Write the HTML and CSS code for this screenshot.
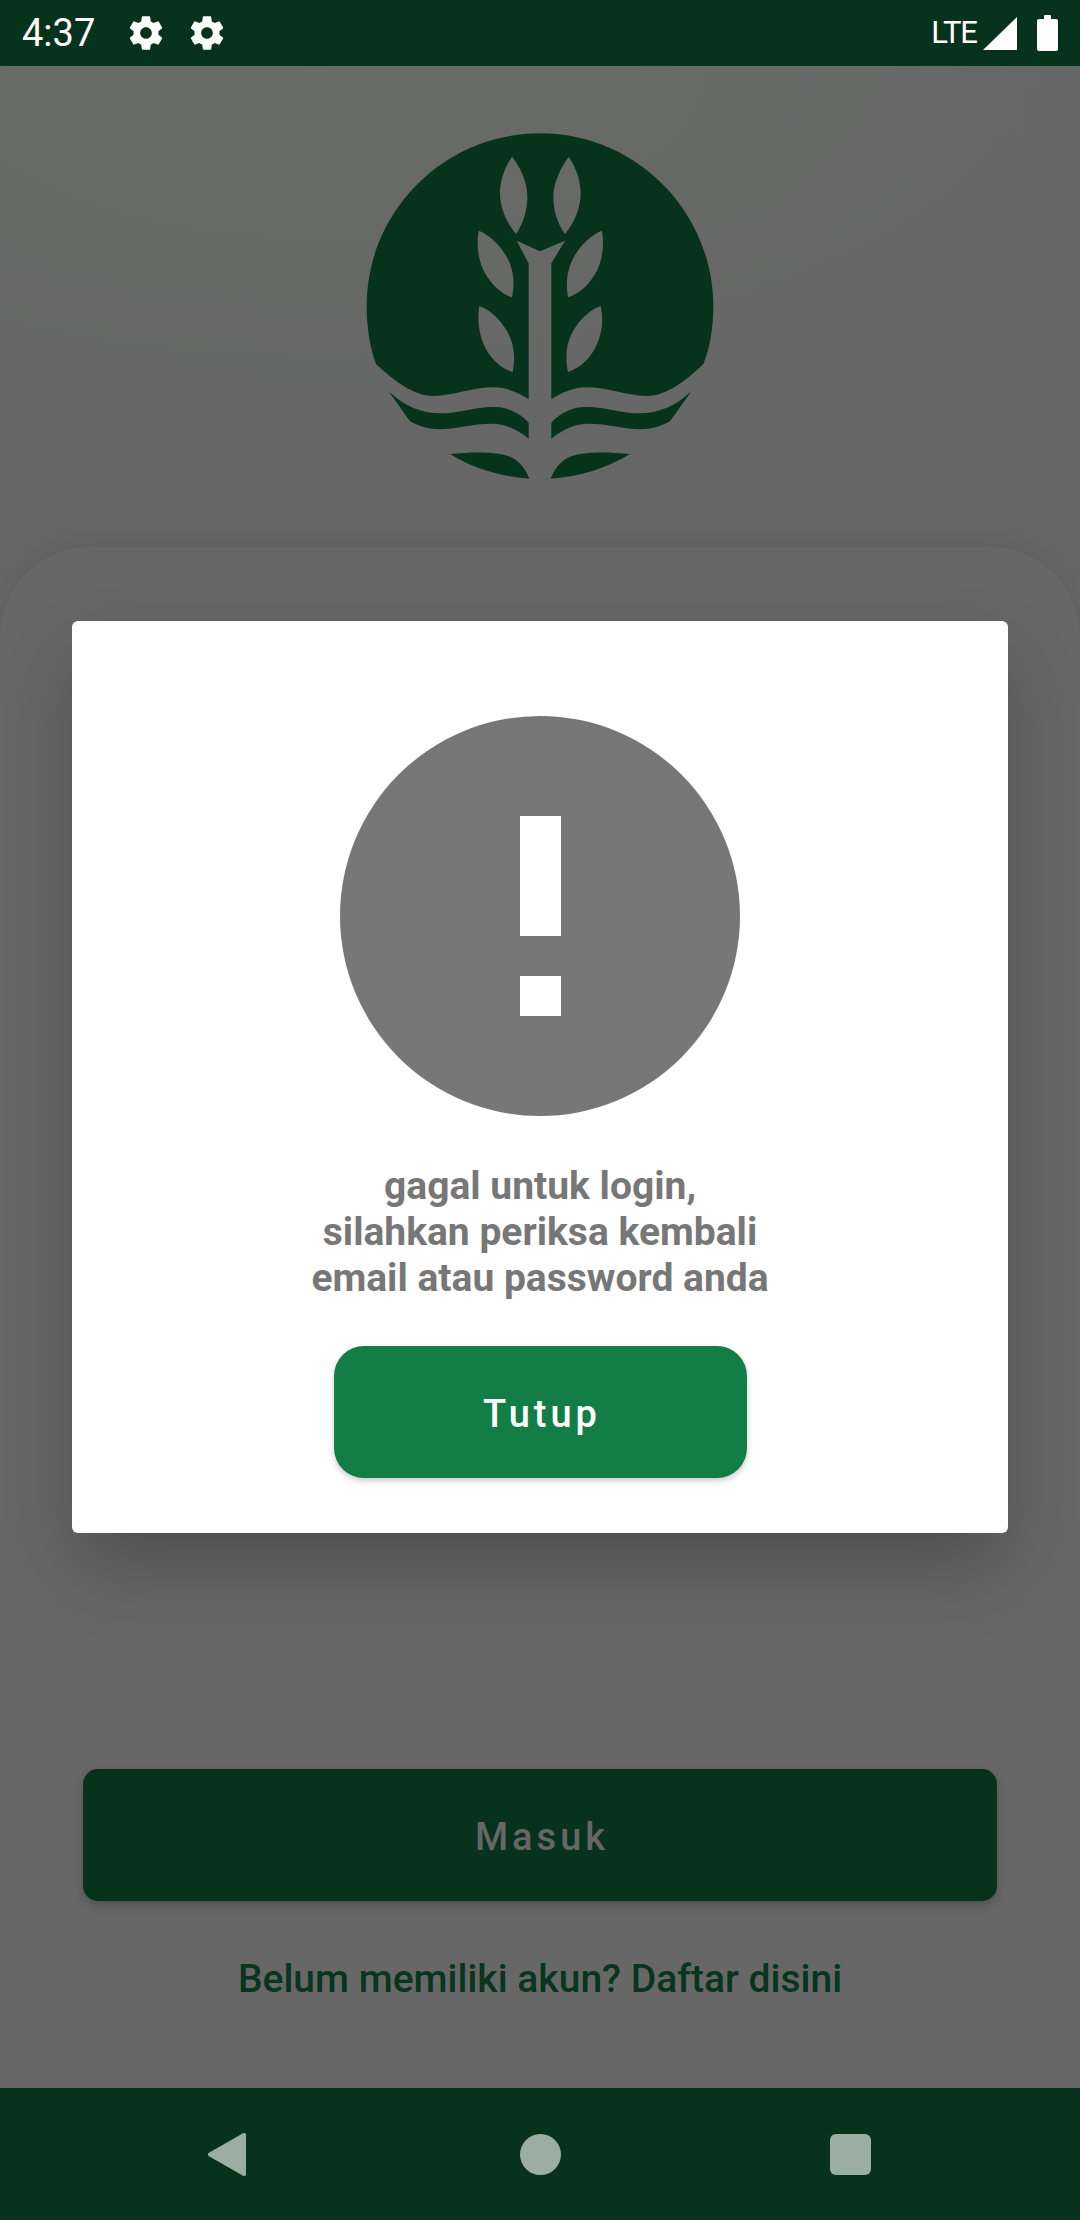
FILE: index.html
```html
<!DOCTYPE html>
<html lang="id">
<head>
<meta charset="utf-8">
<title>Login</title>
<link rel="stylesheet" href="styles.css">
</head>
<body>
<div class="app">
  <header class="status">
    <div class="status-left">
      <span class="time">4:37</span>
      <svg class="gear" viewBox="0 0 24 24"><path d="M19.43 12.98c.04-.32.07-.64.07-.98s-.03-.66-.07-.98l2.11-1.65c.19-.15.24-.42.12-.64l-2-3.46c-.12-.22-.39-.3-.61-.22l-2.49 1c-.52-.4-1.08-.73-1.69-.98l-.38-2.65C14.46 2.18 14.25 2 14 2h-4c-.25 0-.46.18-.49.42l-.38 2.65c-.61.25-1.17.59-1.69.98l-2.49-1c-.23-.09-.49 0-.61.22l-2 3.46c-.13.22-.07.49.12.64l2.11 1.65c-.04.32-.07.65-.07.98s.03.66.07.98l-2.11 1.65c-.19.15-.24.42-.12.64l2 3.46c.12.22.39.3.61.22l2.49-1c.52.4 1.08.73 1.69.98l.38 2.65c.03.24.24.42.49.42h4c.25 0 .46-.18.49-.42l.38-2.65c.61-.25 1.17-.59 1.69-.98l2.49 1c.23.09.49 0 .61-.22l2-3.46c.12-.22.07-.49-.12-.64l-2.11-1.65zM12 15.5c-1.93 0-3.5-1.57-3.5-3.5s1.57-3.5 3.5-3.5 3.5 1.57 3.5 3.5-1.57 3.5-3.5 3.5z"/></svg>
      <svg class="gear" viewBox="0 0 24 24"><path d="M19.43 12.98c.04-.32.07-.64.07-.98s-.03-.66-.07-.98l2.11-1.65c.19-.15.24-.42.12-.64l-2-3.46c-.12-.22-.39-.3-.61-.22l-2.49 1c-.52-.4-1.08-.73-1.69-.98l-.38-2.65C14.46 2.18 14.25 2 14 2h-4c-.25 0-.46.18-.49.42l-.38 2.65c-.61.25-1.17.59-1.69.98l-2.49-1c-.23-.09-.49 0-.61.22l-2 3.46c-.13.22-.07.49.12.64l2.11 1.65c-.04.32-.07.65-.07.98s.03.66.07.98l-2.11 1.65c-.19.15-.24.42-.12.64l2 3.46c.12.22.39.3.61.22l2.49-1c.52.4 1.08.73 1.69.98l.38 2.65c.03.24.24.42.49.42h4c.25 0 .46-.18.49-.42l.38-2.65c.61-.25 1.17-.59 1.69-.98l2.49 1c.23.09.49 0 .61-.22l2-3.46c.12-.22.07-.49-.12-.64l-2.11-1.65zM12 15.5c-1.93 0-3.5-1.57-3.5-3.5s1.57-3.5 3.5-3.5 3.5 1.57 3.5 3.5-1.57 3.5-3.5 3.5z"/></svg>
    </div>
    <div class="status-right">
      <span class="lte">LTE</span>
      <svg class="signal" viewBox="0 0 34 33"><path d="M34 0V33H0Z"/></svg>
      <svg class="battery" viewBox="0 0 21 36"><path d="M7 1a1 1 0 0 1 1-1h5a1 1 0 0 1 1 1V4h5a2 2 0 0 1 2 2v28a2 2 0 0 1-2 2H2a2 2 0 0 1-2-2V6a2 2 0 0 1 2-2h5Z"/></svg>
    </div>
  </header>

  <main class="screen">
    <div class="logo-wrap">
      <svg class="logo" viewBox="0 0 1200 1170">
        <path fill-rule="evenodd" d="M108 762C90 712 80 650 80 590C80 303 313 70 600 70C887 70 1120 303 1120 590C1120 650 1110 712 1090 762C1040 810 980 858 920 858C860 858 800 830 730 832C695 835 660 850 634 868V460L675 392L600 424L530 392L566 460V868C540 850 505 835 470 832C400 830 340 858 280 858C220 858 160 810 108 762Z
        M516 140C495 170 480 210 480 250C480 300 505 345 528 372C550 340 562 300 562 260C562 215 540 170 516 140Z
        M686 140C665 170 640 215 640 260C640 300 652 340 675 372C698 345 722 300 722 250C722 210 707 170 686 140Z
        M416 362C410 400 412 440 430 480C450 520 480 550 516 562C525 520 522 480 500 440C480 405 450 375 416 362Z
        M786 362C752 375 722 405 702 440C680 480 677 520 684 562C720 550 752 520 772 480C790 440 792 400 786 362Z
        M418 588C412 625 414 665 432 705C450 745 482 775 518 786C526 745 524 705 502 665C482 630 452 600 418 588Z
        M782 588C748 600 718 630 698 665C676 705 676 745 684 786C720 775 752 745 770 705C788 665 790 625 782 588Z"/>
        <path d="M146 844C195 890 245 910 300 910C360 910 420 885 480 892C515 897 545 915 566 938V986C540 965 505 945 470 942C410 938 350 958 300 958C265 958 235 948 210 934Z"/>
        <path d="M1054 844C1005 890 955 910 900 910C840 910 780 885 720 892C685 897 655 915 634 938V986C660 965 695 945 730 942C790 938 850 958 900 958C935 958 965 948 990 934Z"/>
        <path d="M330 1032C400 1025 470 1025 510 1040C540 1052 558 1080 568 1106C480 1100 400 1075 330 1032Z"/>
        <path d="M870 1032C800 1025 730 1025 690 1040C660 1052 642 1080 632 1106C720 1100 800 1075 870 1032Z"/>
      </svg>
    </div>
    <section class="sheet">
      <button class="login-btn">Masuk</button>
      <a class="register">Belum memiliki akun? Daftar disini</a>
    </section>

    <div class="overlay">
      <div class="dialog">
        <div class="alert-icon"><span class="bang"></span><span class="dot"></span></div>
        <p class="message">gagal untuk login,<br>silahkan periksa kembali<br>email atau password anda</p>
        <button class="close-btn">Tutup</button>
      </div>
    </div>
  </main>

  <nav class="navbar">
    <svg class="nav-back" viewBox="0 0 40 46"><path d="M37 1.2a2 2 0 0 1 3 1.4V43.4a2 2 0 0 1-3 1.4L2 24.8a2 2 0 0 1 0-3.6Z"/></svg>
    <span class="nav-home"></span>
    <span class="nav-recent"></span>
  </nav>
</div>
</body>
</html>
```

FILE: styles.css
```css
* { box-sizing: border-box; }
html, body { margin: 0; padding: 0; }
body { width: 1080px; height: 2220px; overflow: hidden; font-family: Roboto, sans-serif; background: #676767; }

.app { display: flex; flex-direction: column; height: 2220px; }

.status { height: 66px; flex: none; background: #07331d; color: #fff; display: flex; justify-content: space-between; align-items: center; padding: 0 22px 0 22px; }
.status-left { display: flex; align-items: center; }
.time { font-size: 38px; line-height: 66px; width: 104px; }
.gear { width: 40px; height: 40px; fill: #fff; margin-right: 21px; }
.status-right { display: flex; align-items: center; }
.lte { font-size: 31px; line-height: 66px; margin-right: 6px; letter-spacing: -1px; }
.signal { width: 34px; height: 33px; fill: #fff; margin-right: 20px; }
.battery { width: 21px; height: 36px; fill: #fff; }

.screen { flex: 1; position: relative; display: flex; flex-direction: column; background: radial-gradient(800px 360px at 30% 0, #696b69 0%, rgba(105,107,105,0) 100%), linear-gradient(180deg, #666766 0%, #646665 100%); }
.logo-wrap { height: 481px; padding: 44px 0 0 340px; flex: none; }
.logo { display: block; width: 400px; height: 390px; fill: #07331d; }

.sheet { flex: 1; background: #676767; border-radius: 90px 90px 0 0; box-shadow: 0 -3px 22px rgba(0,0,0,.09); display: flex; flex-direction: column; align-items: center; padding-top: 1222px; }
.login-btn { width: 914px; height: 132px; flex: none; border: 0; border-radius: 15px; padding: 4px 0 0 4px; background: #07331d; color: #666; font: 500 38px Roboto, sans-serif; letter-spacing: 4px; box-shadow: 0 4px 8px rgba(0,0,0,.22); }
.register { margin-top: 56px; font-size: 39px; line-height: 44px; font-weight: 500; color: #07351e; }

.overlay { position: absolute; left: 0; right: 0; top: 555px; display: flex; justify-content: center; }
.dialog { width: 936px; height: 912px; background: #fff; border-radius: 6px; box-shadow: 0 36px 70px -6px rgba(0,0,0,.24); display: flex; flex-direction: column; align-items: center; padding-top: 95px; }
.alert-icon { width: 400px; height: 400px; border-radius: 50%; background: #777; display: flex; flex-direction: column; align-items: center; padding-top: 100px; flex: none; }
.bang { width: 41px; height: 120px; background: #fff; }
.dot { width: 41px; height: 40px; background: #fff; margin-top: 40px; }
.message { margin: 47px 0 0; text-align: center; font-size: 39px; font-weight: 700; line-height: 46px; color: #777; }
.close-btn { margin-top: 45px; width: 413px; height: 132px; flex: none; border: 0; border-radius: 30px; padding: 3px 0 0 4px; background: #137d48; color: #fff; font: 500 38px Roboto, sans-serif; letter-spacing: 4px; box-shadow: 0 3px 6px rgba(0,0,0,.2); }

.navbar { height: 132px; flex: none; background: #07331d; display: flex; align-items: center; }
.nav-back { width: 39px; height: 45px; fill: #9caea4; margin-left: 207px; }
.nav-home { width: 41px; height: 41px; border-radius: 50%; background: #9caea4; margin-left: 274px; }
.nav-recent { width: 41px; height: 41px; border-radius: 6px; background: #9caea4; margin-left: 269px; }
```
